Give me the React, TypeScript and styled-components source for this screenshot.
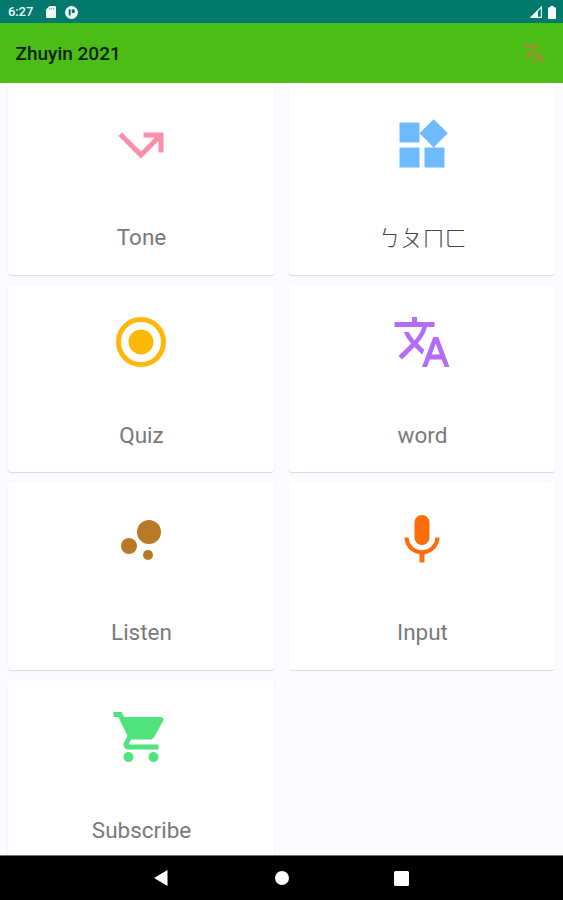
import React from "react";
import styled, { createGlobalStyle } from "styled-components";

const GlobalStyle = createGlobalStyle`
  * { box-sizing: border-box; }
  body { margin: 0; background: #000; font-family: Roboto, "Noto Sans CJK TC", sans-serif; }
`;

const Screen = styled.div`
  display: flex;
  flex-direction: column;
  width: 563px;
  height: 900px;
  overflow: hidden;
  background: #fbfaff;
`;

const StatusBar = styled.div`
  flex: none;
  display: flex;
  align-items: center;
  justify-content: space-between;
  height: 23px;
  padding: 1px 7px 0 8px;
  background: #01796d;
  color: #f2fbfa;
`;

const StatusGroup = styled.div<{ $gap: number }>`
  display: flex;
  align-items: center;
  gap: ${(p) => p.$gap}px;
  svg { display: block; }
`;

const Clock = styled.span`
  width: 26px;
  margin-right: 3px;
  font-size: 13px;
  font-weight: 500;
  letter-spacing: -0.1px;
  line-height: 22px;
  white-space: nowrap;
`;

const AppBar = styled.header`
  flex: none;
  display: flex;
  align-items: center;
  justify-content: space-between;
  height: 60px;
  padding: 1px 18px 0 15.5px;
  background: #4cbd17;
`;

const Title = styled.h1`
  margin: 0;
  font-size: 19px;
  font-weight: 500;
  line-height: 24px;
  letter-spacing: 0;
  color: #0b2004;
`;

const Content = styled.main`
  flex: 1;
  min-height: 0;
  overflow: hidden;
  display: grid;
  grid-template-columns: 266px 266px;
  grid-auto-rows: 187.5px;
  align-content: start;
  gap: 10px 15px;
  padding: 4px 8px 0;
`;

const Card = styled.section`
  display: flex;
  flex-direction: column;
  align-items: center;
  padding-top: 27.5px;
  background: #fff;
  border-radius: 3px;
  box-shadow: 0 1px 1px rgba(0, 0, 0, 0.12), 0 0 2px rgba(0, 0, 0, 0.03);
`;

const Glyph = styled.svg<{ $size: number }>`
  display: block;
  flex: none;
  width: ${(p) => p.$size}px;
  height: ${(p) => p.$size}px;
  fill: currentColor;
  color: ${(p) => p.color};
`;

const Label = styled.span`
  margin-top: 47.5px;
  padding-left: 1px;
  font-size: 22.5px;
  font-weight: 400;
  line-height: 30px;
  color: #797979;
  &:lang(zh) {
    margin-top: 49px;
    font-size: 22px;
    font-weight: 300;
    color: #444;
  }
`;

const NavBar = styled.nav`
  flex: none;
  display: grid;
  grid-template-columns: 120px 120px 120px;
  justify-content: center;
  align-items: center;
  justify-items: center;
  height: 45px;
  border-top: 1px solid #6f736c;
  background: #000;
  svg { display: block; }
`;

const TRANSLATE =
  "M12.87 15.07l-2.54-2.51.03-.03c1.74-1.94 2.98-4.17 3.71-6.53H17V4h-7V2H8v2H1v1.99h11.17C11.5 7.92 10.44 9.75 9 11.35 8.07 10.32 7.3 9.19 6.69 8h-2c.73 1.63 1.73 3.17 2.98 4.56l-5.09 5.02L4 19l5-5 3.11 3.11.76-2.04zM18.5 10h-2L12 22h2l1.12-3h4.75L21 22h2l-4.5-12zm-2.62 7l1.62-4.33L19.12 17h-3.24z";

const items = [
  {
    label: "Tone",
    color: "#fb8da6",
    art: <path d="M3 8.41l9 9 7-7V15h2V7h-8v2h4.59L12 14.59 4.41 7 3 8.41z" />,
  },
  {
    label: "ㄅㄆㄇㄈ",
    lang: "zh-TW",
    color: "#6fbafd",
    art: (
      <path d="M13 13v8h8v-8h-8zM3 21h8v-8H3v8zM3 3v8h8V3H3zm13.66-1.31L11 7.34 16.66 13l5.66-5.66-5.66-5.65z" />
    ),
  },
  {
    label: "Quiz",
    color: "#ffb80a",
    art: (
      <>
        <circle cx="12" cy="12" r="5" />
        <circle cx="12" cy="12" r="9" fill="none" stroke="currentColor" strokeWidth="2" />
      </>
    ),
  },
  { label: "word", color: "#b66cfb", art: <path d={TRANSLATE} /> },
  {
    label: "Listen",
    color: "#b87a26",
    art: (
      <>
        <circle cx="7.2" cy="14.4" r="3.2" />
        <circle cx="14.8" cy="18" r="2" />
        <circle cx="15.2" cy="8.8" r="4.8" />
      </>
    ),
  },
  {
    label: "Input",
    color: "#ff6d0a",
    art: (
      <path d="M12 14c1.66 0 2.99-1.34 2.99-3L15 5c0-1.66-1.34-3-3-3S9 3.34 9 5v6c0 1.66 1.34 3 3 3zm5.3-3c0 3-2.54 5.1-5.3 5.1S6.7 14 6.7 11H5c0 3.41 2.72 6.23 6 6.72V21h2v-3.28c3.28-.48 6-3.3 6-6.72h-1.7z" />
    ),
  },
  {
    label: "Subscribe",
    color: "#50e37d",
    art: (
      <path d="M7 18c-1.1 0-1.99.9-1.99 2S5.9 22 7 22s2-.9 2-2-.9-2-2-2zM1 2v2h2l3.6 7.59-1.35 2.45c-.16.28-.25.61-.25.96 0 1.1.9 2 2 2h12v-2H7.42c-.14 0-.25-.11-.25-.25l.03-.12.9-1.63h7.45c.75 0 1.41-.41 1.75-1.03l3.58-6.49c.08-.14.12-.31.12-.48 0-.55-.45-1-1-1H5.21l-.94-2H1zm16 16c-1.1 0-1.99.9-1.99 2s.89 2 1.99 2 2-.9 2-2-.9-2-2-2z" />
    ),
  },
];

export default function App() {
  return (
    <Screen>
      <GlobalStyle />
      <StatusBar>
        <StatusGroup $gap={9}>
          <Clock>6:27</Clock>
          <svg width="10" height="12" viewBox="0 0 10 12">
            <path
              d="M3.6 0H9a1 1 0 0 1 1 1v10a1 1 0 0 1-1 1H1a1 1 0 0 1-1-1V3.6z"
              fill="currentColor"
            />
            <path d="M3.7 2v1.5M5.7 2v1.5M7.7 2v1.5" stroke="#01796d" strokeWidth=".6" />
          </svg>
          <svg width="13" height="13" viewBox="0 0 13 13">
            <circle cx="6.5" cy="6.5" r="6.5" fill="currentColor" />
            <path d="M3.7 3.3h2v6.2h-2zM6.8 3.3h1.4a1.8 1.8 0 0 1 0 3.7H6.8z" fill="#01796d" />
          </svg>
        </StatusGroup>
        <StatusGroup $gap={6}>
          <svg width="12" height="12" viewBox="0 0 12 12">
            <path d="M11.4 1v10.4H1z" fill="none" stroke="currentColor" strokeWidth="1.1" />
            <path d="M8 4v7.5H.6z" fill="currentColor" />
          </svg>
          <svg width="8" height="13" viewBox="0 0 8 13">
            <path
              d="M2.4 0h3.2v1.2H7a1 1 0 0 1 1 1V12a1 1 0 0 1-1 1H1a1 1 0 0 1-1-1V2.2a1 1 0 0 1 1-1h1.4z"
              fill="currentColor"
            />
          </svg>
        </StatusGroup>
      </StatusBar>
      <AppBar>
        <Title>Zhuyin 2021</Title>
        <Glyph $size={23} color="#a48a2c" viewBox="0 0 24 24">
          <path d={TRANSLATE} />
        </Glyph>
      </AppBar>
      <Content>
        {items.map((item) => (
          <Card key={item.label}>
            <Glyph $size={60} color={item.color} viewBox="0 0 24 24">
              {item.art}
            </Glyph>
            <Label lang={item.lang}>{item.label}</Label>
          </Card>
        ))}
      </Content>
      <NavBar>
        <svg width="16" height="16" viewBox="0 0 16 16">
          <path d="M13.5 0v16L0 8z" fill="#fff" />
        </svg>
        <svg width="14" height="14" viewBox="0 0 14 14">
          <circle cx="7" cy="7" r="7" fill="#fff" />
        </svg>
        <svg width="15" height="15" viewBox="0 0 15 15">
          <rect width="15" height="15" rx="1.5" fill="#fff" />
        </svg>
      </NavBar>
    </Screen>
  );
}
